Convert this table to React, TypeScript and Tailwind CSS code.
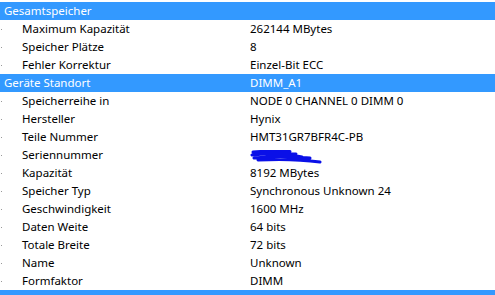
type Row =
  | { kind: "group"; label: string; value?: string }
  | { kind: "item"; label: string; value?: string; hidden?: boolean };

const rows: Row[] = [
  { kind: "group", label: "Gesamtspeicher" },
  { kind: "item", label: "Maximum Kapazität", value: "262144 MBytes" },
  { kind: "item", label: "Speicher Plätze", value: "8" },
  { kind: "item", label: "Fehler Korrektur", value: "Einzel-Bit ECC" },
  { kind: "group", label: "Geräte Standort", value: "DIMM_A1" },
  { kind: "item", label: "Speicherreihe in", value: "NODE 0 CHANNEL 0 DIMM 0" },
  { kind: "item", label: "Hersteller", value: "Hynix" },
  { kind: "item", label: "Teile Nummer", value: "HMT31GR7BFR4C-PB" },
  { kind: "item", label: "Seriennummer", hidden: true },
  { kind: "item", label: "Kapazität", value: "8192 MBytes" },
  { kind: "item", label: "Speicher Typ", value: "Synchronous Unknown 24" },
  { kind: "item", label: "Geschwindigkeit", value: "1600 MHz" },
  { kind: "item", label: "Daten Weite", value: "64 bits" },
  { kind: "item", label: "Totale Breite", value: "72 bits" },
  { kind: "item", label: "Name", value: "Unknown" },
  { kind: "item", label: "Formfaktor", value: "DIMM" },
  { kind: "group", label: "Geräte Standort", value: "DIMM_A2" },
];

// blue marker scribble over the serial number
function Scribble() {
  return (
    <svg width="72" height="14" viewBox="0 0 72 14" className="block translate-y-[2px]">
      <path
        d="M3 2 C14 1 26 1 40 1.5 M2 5 C16 3 30 3 46 4 M4 8 C20 6 40 6 60 8 M8 10 C26 9 48 9 70 12 M18 4 C30 5 42 5 52 7"
        stroke="#0a10e8"
        strokeWidth="3"
        strokeLinecap="round"
        fill="none"
      />
    </svg>
  );
}

export default function App() {
  return (
    <div className="h-[295px] w-[495px] overflow-hidden bg-white pt-[2px] font-['Segoe_UI','Noto_Sans',sans-serif] text-[11.5px] text-black">
      {rows.map((row, i) =>
        row.kind === "group" ? (
          <div key={i} className="grid h-[18px] grid-cols-[250px_1fr] items-center bg-[#3399ff] text-white">
            <span className="pl-[4px] leading-none">{row.label}</span>
            <span className="leading-none">{row.value}</span>
          </div>
        ) : (
          <div key={i} className="relative grid h-[18px] grid-cols-[250px_1fr] items-center">
            <span className="absolute left-[1px] top-[9px] h-px w-px bg-[#999]" />
            <span className="pl-[22px] leading-none">{row.label}</span>
            {row.hidden ? <Scribble /> : <span className="leading-none">{row.value}</span>}
          </div>
        )
      )}
    </div>
  );
}
